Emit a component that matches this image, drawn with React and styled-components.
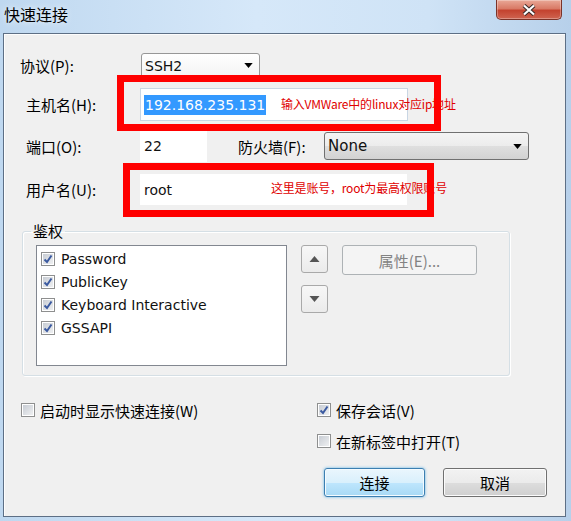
import React from 'react'
import styled, { createGlobalStyle } from 'styled-components'

const GlobalStyle = createGlobalStyle`
  html, body {
    margin: 0;
    padding: 0;
  }
  body {
    width: 571px;
    height: 521px;
    overflow: hidden;
    font-family: "Noto Sans CJK SC", sans-serif;
    color: #000;
  }
`

function Arrow({ up, color = '#000', w = 9, h = 5 }) {
  return (
    <svg width={w} height={h} viewBox="0 0 10 6" style={{ display: 'block' }}>
      <polygon points={up ? '0,6 5,0 10,6' : '0,0 10,0 5,6'} fill={color} />
    </svg>
  )
}

function Check({ on }) {
  return (
    <Box>
      {on && (
        <svg width="12" height="12" viewBox="0 0 12 12">
          <path d="M2.5 6.5 L5 9 L9.5 2.5" fill="none" stroke="#3b5aa0" strokeWidth="2" />
        </svg>
      )}
    </Box>
  )
}

function App() {
  return (
    <>
      <GlobalStyle />
      <Window>
        <TitleBar>
          <Title>快速连接</Title>
          <CloseButton>
            <svg width="16" height="12" viewBox="0 0 16 12">
              <path d="M3 1.5 L13 10.5 M13 1.5 L3 10.5" stroke="#3a2a28" strokeWidth="4.2" />
              <path d="M3 1.5 L13 10.5 M13 1.5 L3 10.5" stroke="#fff" strokeWidth="2.2" />
            </svg>
          </CloseButton>
        </TitleBar>

        <Panel>
          <Row $h={25}>
            <Label $indent={16}>协议(P):</Label>
            <Select $w={119} $h={25} $ml={1} $light>
              <span>SSH2</span>
              <Arrow />
            </Select>
          </Row>

          <Row $h={33} $gap={10}>
            <Label $indent={22}>主机名(H):</Label>
            <TextField $w={268} $border="#c9d6e4">
              <Selected>192.168.235.131</Selected>
            </TextField>
          </Row>

          <Row $h={32} $gap={9}>
            <Label $indent={22}>端口(O):</Label>
            <TextField $w={67}>22</TextField>
            <Label $w={117} $indent={31}>防火墙(F):</Label>
            <Select $w={205} $h={28} $big>
              <span>None</span>
              <Arrow />
            </Select>
          </Row>

          <Row $h={31} $gap={12}>
            <Label $indent={22}>用户名(U):</Label>
            <TextField $w={267}>root</TextField>
          </Row>

          <Group>
            <Legend>鉴权</Legend>
            <GroupBody>
              <ListBox>
                {['Password', 'PublicKey', 'Keyboard Interactive', 'GSSAPI'].map((m) => (
                  <ListItem key={m}>
                    <Check on />
                    <span>{m}</span>
                  </ListItem>
                ))}
              </ListBox>
              <ArrowStack>
                <ArrowButton><Arrow up color="#555" w={11} h={6} /></ArrowButton>
                <ArrowButton><Arrow color="#555" w={11} h={6} /></ArrowButton>
              </ArrowStack>
              <PropButton>属性(E)...</PropButton>
            </GroupBody>
          </Group>

          <Footer>
            <div>
              <CheckRow $indent={17}>
                <Check />
                <span>启动时显示快速连接(W)</span>
              </CheckRow>
            </div>
            <div>
              <CheckRow>
                <Check on />
                <span>保存会话(V)</span>
              </CheckRow>
              <CheckRow $gap={11}>
                <Check />
                <span>在新标签中打开(T)</span>
              </CheckRow>
              <ButtonRow>
                <Button $w={101} $primary>连接</Button>
                <Button $w={104}>取消</Button>
              </ButtonRow>
            </div>
          </Footer>

          <Note $x={277} $y={62}>输入VMWare中的linux对应ip地址</Note>
          <Note $x={267} $y={146}>这里是账号，root为最高权限账号</Note>
          <RedFrame $x={113} $y={41} $w={324} $h={56} />
          <RedFrame $x={119} $y={129} $w={311} $h={54} />
        </Panel>
      </Window>
    </>
  )
}

export default App

const Window = styled.div`
  width: 571px;
  height: 521px;
  display: flex;
  flex-direction: column;
  background: linear-gradient(90deg, #bfd8f0 0%, #d6e8f9 45%, #cfe3f6 75%, #b7d0ea 100%);
  overflow: hidden;
`

const TitleBar = styled.div`
  height: 33px;
  flex-shrink: 0;
  display: flex;
  justify-content: space-between;
  align-items: flex-start;
  padding-left: 4px;
`

const Title = styled.h1`
  margin: 0;
  font: 400 16px/28px "Noto Sans CJK SC", sans-serif;
  color: #000;
  text-shadow: 0 0 6px rgba(255, 255, 255, 0.9);
`

const CloseButton = styled.div`
  box-sizing: border-box;
  width: 66px;
  height: 20px;
  margin-right: 9px;
  display: flex;
  align-items: center;
  justify-content: center;
  border: 1px solid #7b3328;
  border-top: none;
  border-radius: 0 0 5px 5px;
  background: linear-gradient(#e9a897 0%, #d97a66 45%, #c4432f 55%, #cf6450 100%);
  box-shadow: inset 0 0 0 1px rgba(255, 255, 255, 0.3);
`

const Panel = styled.div`
  position: relative;
  flex: 1;
  margin: 0 5px 4px 3px;
  padding-top: 19px;
  border: 1px solid #5d6f85;
  background: #f0f0f0;
  box-shadow: inset 1px 1px 0 #fdfdfd;
`

const Row = styled.div`
  display: flex;
  align-items: center;
  height: ${(p) => p.$h}px;
  margin-top: ${(p) => p.$gap || 0}px;
`

const Label = styled.label`
  box-sizing: border-box;
  flex-shrink: 0;
  width: ${(p) => p.$w || 136}px;
  padding-left: ${(p) => p.$indent || 0}px;
  font-size: 15px;
  white-space: nowrap;
`

const Select = styled.div`
  box-sizing: border-box;
  width: ${(p) => p.$w}px;
  height: ${(p) => p.$h}px;
  margin-left: ${(p) => p.$ml || 0}px;
  display: flex;
  align-items: center;
  justify-content: space-between;
  padding: 0 6px 0 3px;
  border: 1px solid ${(p) => (p.$light ? '#979797' : '#707070')};
  border-radius: 3px;
  background: ${(p) =>
    p.$light
      ? 'linear-gradient(#ffffff, #f3f3f3)'
      : 'linear-gradient(#f4f4f4, #ececec 50%, #dfdfdf 51%, #d2d2d2)'};
  font: ${(p) => (p.$big ? 15 : 14)}px "DejaVu Sans", sans-serif;
  color: #111;
`

const TextField = styled.div`
  box-sizing: border-box;
  width: ${(p) => p.$w}px;
  height: 100%;
  display: flex;
  align-items: center;
  padding-left: 3px;
  background: #fff;
  border: 1px solid ${(p) => p.$border || '#fff'};
  font: 14px "DejaVu Sans", sans-serif;
  color: #111;
`

const Selected = styled.span`
  padding: 0 1px;
  line-height: 20px;
  background: #3399ff;
  color: #fff;
`

const Note = styled.div`
  position: absolute;
  left: ${(p) => p.$x}px;
  top: ${(p) => p.$y}px;
  font: 12px/16px "Noto Sans CJK SC", sans-serif;
  letter-spacing: -0.2px;
  color: #e00000;
  white-space: nowrap;
`

const RedFrame = styled.div`
  position: absolute;
  box-sizing: border-box;
  left: ${(p) => p.$x}px;
  top: ${(p) => p.$y}px;
  width: ${(p) => p.$w}px;
  height: ${(p) => p.$h}px;
  border: 7px solid #f00;
`

const Group = styled.fieldset`
  box-sizing: border-box;
  width: 488px;
  margin: 16px 0 0 18px;
  padding: 4px 0 9px 0;
  border: 1px solid #d5dfe5;
  border-radius: 3px;
  box-shadow: inset 1px 1px 0 #fff, 1px 1px 0 #fff;
  min-inline-size: 0;
`

const Legend = styled.legend`
  margin-left: 8px;
  padding: 0 2px;
  font-size: 15px;
  line-height: 20px;
`

const GroupBody = styled.div`
  display: flex;
  align-items: flex-start;
  padding-left: 13px;
`

const ListBox = styled.div`
  box-sizing: border-box;
  width: 251px;
  height: 121px;
  padding: 1px 0 0 4px;
  border: 1px solid #828790;
  background: #fff;
`

const ListItem = styled.div`
  display: flex;
  align-items: center;
  gap: 6px;
  height: 23px;
  font: 14px "DejaVu Sans", sans-serif;
  color: #111;
`

const Box = styled.span`
  box-sizing: border-box;
  flex-shrink: 0;
  width: 14px;
  height: 14px;
  display: flex;
  align-items: center;
  justify-content: center;
  border: 1px solid #8e8f8f;
  background: linear-gradient(135deg, #c4c9d1, #f2f3f4);
  box-shadow: inset 0 0 0 1px #fff;
`

const ArrowStack = styled.div`
  display: flex;
  flex-direction: column;
  gap: 12px;
  margin-left: 14px;
`

const ArrowButton = styled.div`
  box-sizing: border-box;
  width: 27px;
  height: 28px;
  display: flex;
  align-items: center;
  justify-content: center;
  border: 1px solid #a9a9a9;
  border-radius: 3px;
  background: linear-gradient(#f7f7f7, #ebebeb);
`

const PropButton = styled.div`
  box-sizing: border-box;
  width: 135px;
  height: 30px;
  margin-left: 14px;
  display: flex;
  align-items: center;
  justify-content: center;
  border: 1px solid #adb2b5;
  border-radius: 3px;
  background: #f4f4f4;
  font-size: 15px;
  color: #838383;
`

const Footer = styled.div`
  display: grid;
  grid-template-columns: 313px 1fr;
  margin-top: 24px;
`

const CheckRow = styled.div`
  display: flex;
  align-items: center;
  gap: 5px;
  height: 20px;
  margin-top: ${(p) => p.$gap || 0}px;
  padding-left: ${(p) => p.$indent || 0}px;
  font-size: 15px;
  white-space: nowrap;
`

const ButtonRow = styled.div`
  display: flex;
  gap: 18px;
  margin-top: 17px;
  padding-left: 7px;
`

const Button = styled.div`
  box-sizing: border-box;
  width: ${(p) => p.$w}px;
  height: 29px;
  display: flex;
  align-items: center;
  justify-content: center;
  border: 1px solid ${(p) => (p.$primary ? '#3c7fb1' : '#707070')};
  border-radius: 3px;
  background: ${(p) =>
    p.$primary
      ? 'linear-gradient(#eaf6fd, #d9f0fc 50%, #bee6fd 51%, #a7d9f5)'
      : 'linear-gradient(#f2f2f2, #ebebeb 50%, #dddddd 51%, #cfcfcf)'};
  box-shadow: ${(p) =>
    p.$primary ? '0 0 3px #5fb2e6, inset 0 0 0 1px #f4fbff' : 'inset 0 0 0 1px #fbfbfb'};
  font-size: 15px;
`
